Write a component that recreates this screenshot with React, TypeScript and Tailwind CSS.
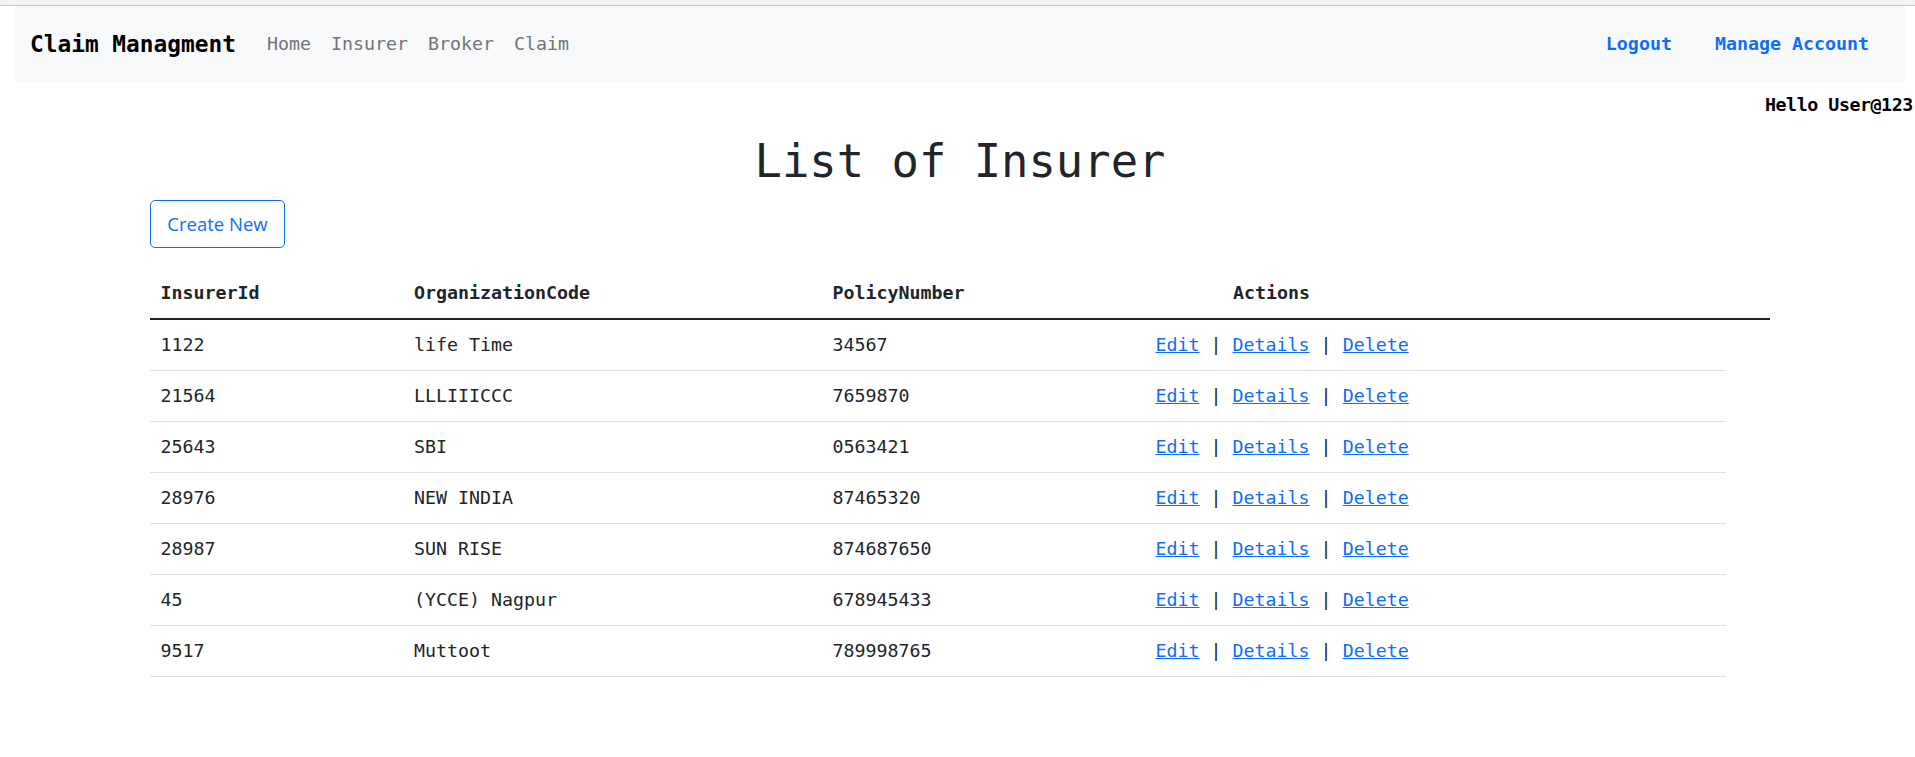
const navLinks = ['Home', 'Insurer', 'Broker', 'Claim']

const insurers = [
  { id: '1122', org: 'life Time', policy: '34567' },
  { id: '21564', org: 'LLLIIICCC', policy: '7659870' },
  { id: '25643', org: 'SBI', policy: '0563421' },
  { id: '28976', org: 'NEW INDIA', policy: '87465320' },
  { id: '28987', org: 'SUN RISE', policy: '874687650' },
  { id: '45', org: '(YCCE) Nagpur', policy: '678945433' },
  { id: '9517', org: 'Muttoot', policy: '789998765' },
]

export default function App() {
  return (
    <div className="min-h-screen w-full overflow-hidden bg-white font-['DejaVu_Sans_Mono',monospace] text-[18.3px] leading-[30px] text-[#212529]">
      {/* browser strip */}
      <div className="h-[6px] border-b border-[#c6c6c6] bg-[#f3f3f3]" />

      {/* Navbar */}
      <nav className="ml-[15px] mr-[10px] flex h-[75px] items-center justify-between bg-[#f8f9fa] pl-[15px]">
        <div className="flex items-center">
          <a className="mr-[21px] text-[22.8px] font-bold text-black">Claim Managment</a>
          {navLinks.map((l) => (
            <a key={l} className="px-[10px] text-[#737475]">
              {l}
            </a>
          ))}
        </div>
        <div className="flex gap-[43px] pr-[36px] font-bold text-[#0d6efd]">
          <a>Logout</a>
          <a>Manage Account</a>
        </div>
      </nav>

      <div className="ml-[1765px] mt-[9px] whitespace-nowrap font-bold tracking-[-0.45px] text-black">Hello User@123!</div>

      {/* Content */}
      <div className="ml-[150px] w-[1620px]">
        <h1 className="mt-[12px] text-center text-[45.5px] leading-[60px] font-normal">List of Insurer</h1>

        <button className="mt-[8px] h-[48px] w-[135px] rounded-[5px] border border-[#0d6efd] font-['Open_Sans',sans-serif] text-[18.5px] text-[#0d6efd]">
          Create New
        </button>

        <div className="mt-[20px]">
          <div className="grid h-[52px] grid-cols-[253.5px_418.5px_323px_1fr] items-center border-b-2 border-[#212529] font-bold">
            <div className="px-[10.5px]">InsurerId</div>
            <div className="px-[10.5px]">OrganizationCode</div>
            <div className="px-[10.5px]">PolicyNumber</div>
            <div className="pl-[88px]">Actions</div>
          </div>
          {insurers.map((r) => (
            <div
              key={r.id}
              className="grid h-[51px] w-[1576px] grid-cols-[253.5px_418.5px_323px_1fr] items-center border-b border-[#dee2e6]"
            >
              <div className="px-[10.5px]">{r.id}</div>
              <div className="whitespace-pre px-[10.5px]">{r.org}</div>
              <div className="px-[10.5px]">{r.policy}</div>
              <div className="whitespace-pre px-[10.5px]">
                <a className="text-[#0d6efd] underline">Edit</a>
                {' | '}
                <a className="text-[#0d6efd] underline">Details</a>
                {' | '}
                <a className="text-[#0d6efd] underline">Delete</a>
              </div>
            </div>
          ))}
        </div>
      </div>
    </div>
  )
}
